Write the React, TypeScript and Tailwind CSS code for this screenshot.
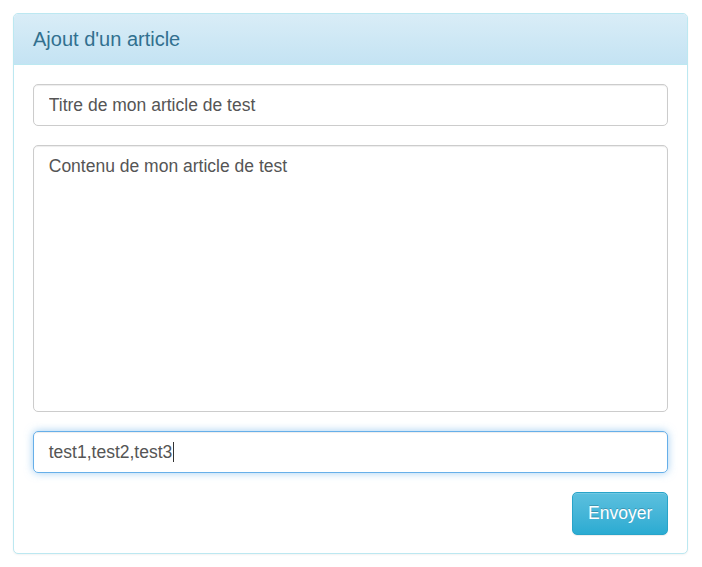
const font = "font-['Helvetica_Neue','Liberation_Sans',Arial,sans-serif]";

export default function App() {
  return (
    <main className={`min-h-screen bg-white p-[13px] ${font}`}>
      <section className="w-[675px] rounded-[5px] border border-[#bce8f1] bg-white shadow-[0_1px_2px_rgba(0,0,0,0.05)]">
        <header className="rounded-t-[4px] border-b border-[#bce8f1] bg-gradient-to-b from-[#d9edf7] to-[#c4e3f3] px-[19px] py-[12px]">
          <h3 className="text-[20px] leading-[26px] text-[#31708f]">
            Ajout d'un article
          </h3>
        </header>

        <form className="flex flex-col gap-[18.75px] p-[18.75px]">
          <input
            type="text"
            defaultValue="Titre de mon article de test"
            className="h-[42.5px] w-full rounded-[5px] border border-[#ccc] px-[15px] text-[17.5px] text-[#555] shadow-[inset_0_1px_1px_rgba(0,0,0,0.075)] outline-none"
          />
          <textarea
            defaultValue="Contenu de mon article de test"
            className="h-[267px] w-full resize-none rounded-[5px] border border-[#ccc] px-[15px] py-[7.5px] text-[17.5px] leading-[25px] text-[#555] shadow-[inset_0_1px_1px_rgba(0,0,0,0.075)] outline-none"
          />
          <div className="flex h-[42.5px] w-full items-center rounded-[5px] border border-[#66afe9] px-[15px] text-[17.5px] text-[#555] shadow-[inset_0_1px_1px_rgba(0,0,0,0.075),0_0_8px_rgba(102,175,233,0.6)]">
            <span>test1,test2,test3</span>
            <span className="ml-[1px] h-[20px] w-px bg-[#333]" />
          </div>
          <div className="flex justify-end">
            <button
              type="button"
              className="h-[42.5px] rounded-[5px] border border-[#28a4c9] bg-gradient-to-b from-[#5bc0de] to-[#2aabd2] px-[15px] text-[17.5px] text-white shadow-[inset_0_1px_0_rgba(255,255,255,0.15),0_1px_1px_rgba(0,0,0,0.075)] [text-shadow:0_-1px_0_rgba(0,0,0,0.2)]"
            >
              Envoyer
            </button>
          </div>
        </form>
      </section>
    </main>
  );
}
